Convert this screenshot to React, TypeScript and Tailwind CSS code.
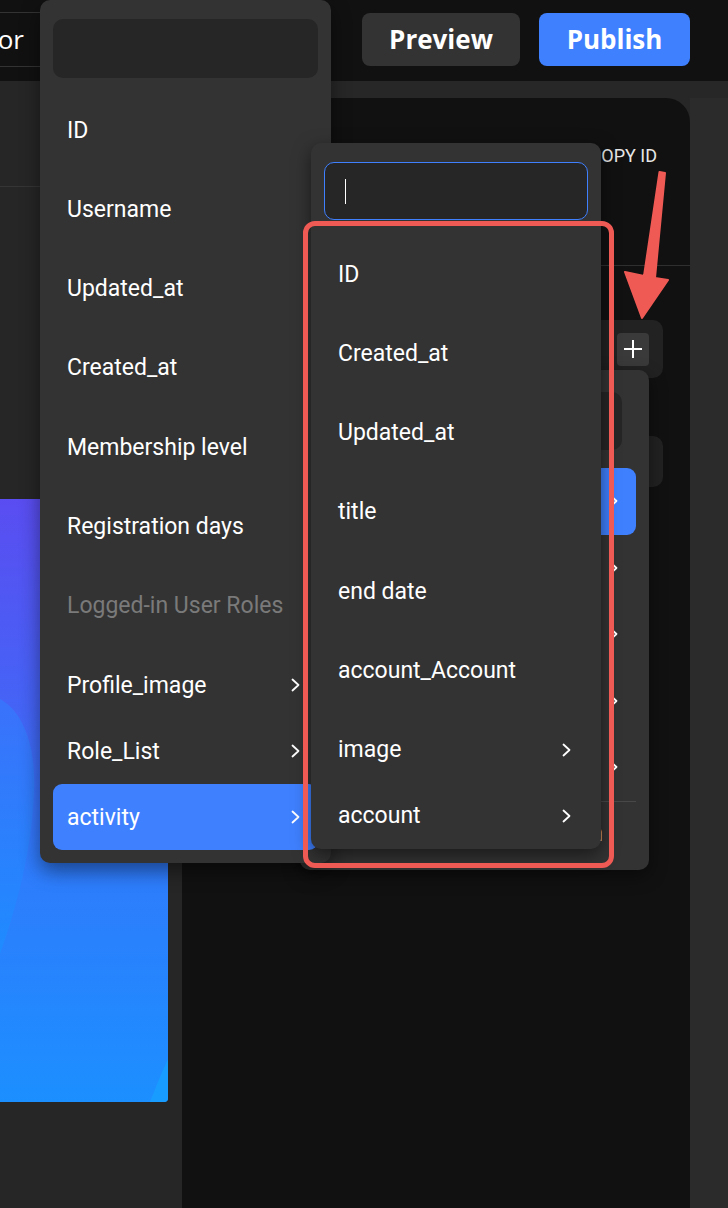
import React from "react";

const Chevron: React.FC<{ className?: string }> = ({ className }) => (
    <svg width="9" height="14" viewBox="0 0 9 14" fill="none" className={className}>
        <polyline points="1.5,1.5 7.5,7 1.5,12.5" stroke="#ffffff" strokeWidth="1.8" strokeLinecap="round" strokeLinejoin="round" />
    </svg>
);

interface Field {
    label: string;
    nested?: boolean;
    muted?: boolean;
    active?: boolean;
}

const userFields: Field[] = [
    { label: "ID" },
    { label: "Username" },
    { label: "Updated_at" },
    { label: "Created_at" },
    { label: "Membership level" },
    { label: "Registration days" },
    { label: "Logged-in User Roles", muted: true },
    { label: "Profile_image", nested: true },
    { label: "Role_List", nested: true },
    { label: "activity", nested: true, active: true },
];

const activityFields: Field[] = [
    { label: "ID" },
    { label: "Created_at" },
    { label: "Updated_at" },
    { label: "title" },
    { label: "end date" },
    { label: "account_Account" },
    { label: "image", nested: true },
    { label: "account", nested: true },
];

const FieldRow: React.FC<{ field: Field; chevronPad: string }> = ({ field, chevronPad }) => (
    <div
        className={`h-[66px] shrink-0 flex items-center justify-between pl-[14px] ${chevronPad} rounded-[9px] ${
            field.nested ? "" : "mb-[13.3px]"
        } ${field.active ? "bg-[#3f80ff]" : ""}`}
    >
        <span className={`text-[23px] leading-none ${field.muted ? "text-[#7a7a7a]" : "text-white"}`}>{field.label}</span>
        {field.nested && <Chevron />}
    </div>
);

const GradientCard: React.FC = () => (
    <svg width="168" height="603" viewBox="0 0 168 603" className="block rounded-br-[4px]">
        <defs>
            <linearGradient id="card" x1="0" y1="0" x2="0" y2="1">
                <stop offset="0" stopColor="#5a4df1" />
                <stop offset="0.35" stopColor="#4464f6" />
                <stop offset="0.6" stopColor="#2f7bfc" />
                <stop offset="1" stopColor="#1c8fff" />
            </linearGradient>
            <linearGradient id="blob" x1="0" y1="0" x2="0" y2="1">
                <stop offset="0" stopColor="#3a72fb" />
                <stop offset="1" stopColor="#1f8bff" />
            </linearGradient>
        </defs>
        <rect width="168" height="603" fill="url(#card)" />
        <path d="M0 200 C22 212 36 244 34 292 C32 352 16 410 0 455 Z" fill="url(#blob)" />
        <path d="M168 560 L168 603 L150 603 C156 588 162 572 168 560 Z" fill="#199cff" />
    </svg>
);

export default function App() {
    return (
        <div className="relative w-[728px] h-[1208px] overflow-hidden bg-[#272727] font-['Roboto',sans-serif]">
            {/* top bar */}
            <header className="h-[81px] bg-[#111111] flex items-start">
                <div className="mt-[12px] w-[40px] h-[55px] border-y border-[#333333] overflow-hidden flex items-center justify-end pr-[16px]">
                    <span className="font-['Open_Sans',sans-serif] text-[26px] text-white whitespace-nowrap">Editor</span>
                </div>
                <div className="ml-auto mt-[13px] flex gap-[19px] pr-[38px]">
                    <button className="w-[158px] h-[53px] rounded-[8px] bg-[#333333] flex items-center justify-center">
                        <span className="font-['Open_Sans',sans-serif] text-[26px] font-bold text-white">Preview</span>
                    </button>
                    <button className="w-[151px] h-[53px] rounded-[8px] bg-[#3f80ff] flex items-center justify-center">
                        <span className="font-['Open_Sans',sans-serif] text-[26px] font-bold text-white">Publish</span>
                    </button>
                </div>
            </header>

            <div className="flex h-[1127px]">
                {/* left panel */}
                <aside className="w-[182px] bg-[#262626] flex flex-col">
                    <div className="h-[106px] border-b border-[#353535]" />
                    <div className="mt-[312px]">
                        <GradientCard />
                    </div>
                </aside>

                {/* canvas panel */}
                <main className="flex-1 flex pt-[17px]">
                    <section className="w-[508px] bg-[#111111] rounded-tr-[24px] flex flex-col">
                        <div className="h-[168px] border-b border-[#2f2f2f] flex justify-end pr-[33px] pt-[47px]">
                            <span className="text-[18px] leading-[22px] text-[#e6e6e6]">COPY ID</span>
                        </div>
                        <div className="mt-[54px] ml-[120px] mr-[27px] h-[58px] rounded-[10px] bg-[#222222] flex items-center justify-end pr-[14px]">
                            <div className="w-[32px] h-[33px] rounded-[4px] bg-[#3a3a3a] flex items-center justify-center">
                                <svg width="20" height="20" viewBox="0 0 20 20">
                                    <path d="M10 1v18M1 10h18" stroke="#ffffff" strokeWidth="2" />
                                </svg>
                            </div>
                        </div>
                        <div className="mt-[58px] ml-[120px] mr-[27px] h-[51px] rounded-[10px] bg-[#222222]" />
                    </section>
                    <div className="flex-1 bg-[#2b2b2b]" />
                </main>
            </div>

            {/* third-level menu behind */}
            <div className="absolute left-[300px] top-[370px] w-[349px] h-[500px] rounded-[10px] bg-[#333333] shadow-[0_6px_18px_rgba(0,0,0,0.45)] flex flex-col px-[13px] pt-[22px]">
                <div className="h-[58px] mr-[14px] rounded-[10px] bg-[#262626]" />
                <div className="mt-[18px] flex flex-col">
                    {[0, 1, 2, 3, 4].map((i) => (
                        <div
                            key={i}
                            className={`h-[66.5px] flex items-center justify-end pr-[18px] rounded-[9px] ${i === 0 ? "bg-[#3f80ff]" : ""}`}
                        >
                            <Chevron />
                        </div>
                    ))}
                </div>
                <div className="border-t border-[#484848]" />
                <div className="h-[66px] flex items-center justify-end pr-[33px]">
                    <span className="text-[23px] text-white">Custom</span>
                </div>
            </div>

            {/* user fields menu */}
            <div className="absolute left-[40px] top-0 w-[291px] h-[863px] rounded-[10px] bg-[#333333] shadow-[0_8px_20px_rgba(0,0,0,0.45)] flex flex-col px-[13px] pt-[19px]">
                <div className="h-[59px] shrink-0 rounded-[10px] bg-[#262626]" />
                <div className="mt-[19px] flex flex-col">
                    {userFields.map((f) => (
                        <FieldRow key={f.label} field={f} chevronPad="pr-[18px]" />
                    ))}
                </div>
            </div>

            {/* activity submenu */}
            <div className="absolute left-[311px] top-[143px] w-[290px] h-[706px] rounded-[10px] bg-[#333333] shadow-[0_6px_18px_rgba(0,0,0,0.5)] flex flex-col px-[13px] pt-[19px]">
                <div className="h-[58px] shrink-0 rounded-[10px] bg-[#262626] border border-[#3f80ff] flex items-center pl-[20px]">
                    <div className="w-px h-[25px] bg-white" />
                </div>
                <div className="mt-[21px] flex flex-col">
                    {activityFields.map((f) => (
                        <FieldRow key={f.label} field={f} chevronPad="pr-[17px]" />
                    ))}
                </div>
            </div>

            {/* annotation */}
            <div className="absolute left-[303px] top-[221px] w-[311px] h-[647px] rounded-[12px] border-[5px] border-[#f05a55]" />
            <svg className="absolute left-[620px] top-[168px]" width="52" height="156" viewBox="0 0 52 156">
                <path
                    d="M39.5 4 L45 5 L35 110 L48 112 L22 150 L5 104 L24 108 Z"
                    fill="#f05a55"
                    stroke="#f05a55"
                    strokeWidth="2"
                    strokeLinejoin="round"
                />
            </svg>
        </div>
    );
}
